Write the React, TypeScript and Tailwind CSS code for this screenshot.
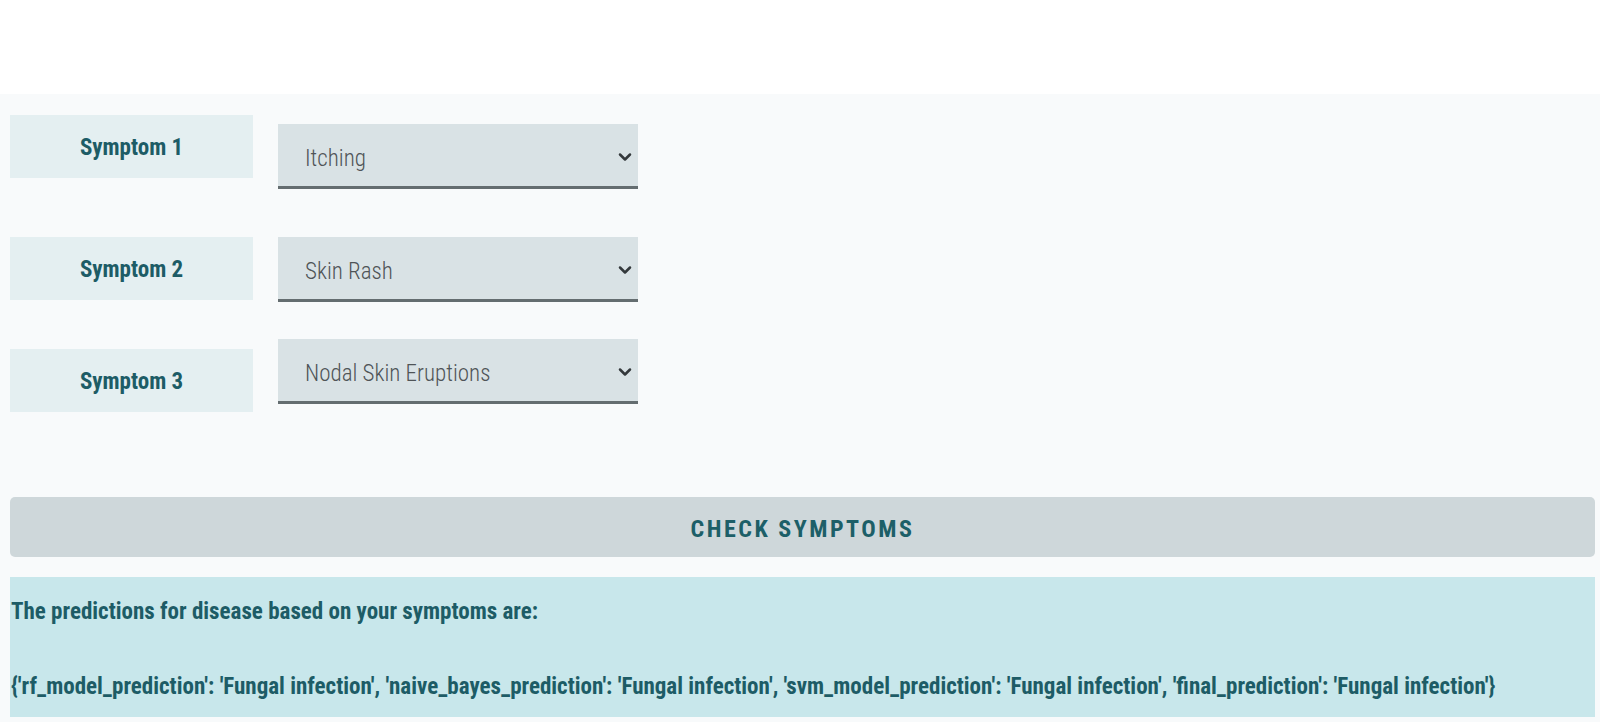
import { ChevronDown } from "lucide-react";

const font = { fontFamily: "'Roboto Condensed', Roboto, 'Liberation Sans', sans-serif" };

const SymptomSelect = ({ value }: { value: string }) => {
  return (
    <div className="relative w-[360px] h-[65px] bg-[#d9e2e5] border-b-[3px] border-[#646d70]">
      <select
        value={value}
        onChange={() => {}}
        className="appearance-none w-full h-full bg-transparent pl-[27px] pt-[8px] text-[23px] font-light text-[#4f5457] outline-none"
        style={font}
      >
        <option>{value}</option>
      </select>
      <ChevronDown
        size={20}
        strokeWidth={3}
        className="absolute right-[3px] top-[23px] text-[#33383b] pointer-events-none"
      />
    </div>
  );
};

const Label = ({ text }: { text: string }) => (
  <div className="w-[243px] h-[63px] pt-[3px] bg-[#e4eff1] flex items-center justify-center text-[23px] font-bold text-[#1d5c66]">
    {text}
  </div>
);

export default function App() {
  return (
    <div className="w-full min-h-screen bg-[#f8fafb]" style={font}>
      {/* top band */}
      <div className="h-[94px] bg-white" />

      <section className="pt-[21px] pl-[10px] pr-[5px] pb-[5px]">
        {/* Row 1 */}
        <div className="flex items-start gap-[25px]">
          <Label text="Symptom 1" />
          <div className="mt-[9px]">
            <SymptomSelect value="Itching" />
          </div>
        </div>

        {/* Row 2 */}
        <div className="flex items-start gap-[25px] mt-[48px]">
          <Label text="Symptom 2" />
          <SymptomSelect value="Skin Rash" />
        </div>

        {/* Row 3 */}
        <div className="flex items-start gap-[25px] mt-[37px]">
          <div className="mt-[10px]">
            <Label text="Symptom 3" />
          </div>
          <SymptomSelect value="Nodal Skin Eruptions" />
        </div>

        <button className="mt-[85px] w-full h-[60px] pt-[3px] rounded-[5px] bg-[#ced7da] text-[24px] font-bold tracking-[2.5px] text-[#1d5f68] uppercase">
          Check Symptoms
        </button>

        <div className="mt-[20px] h-[140px] bg-[#c8e7eb] pl-[1px] pt-[17px] text-[23px] font-bold text-[#1d5c66]">
          <p className="leading-[36px]">The predictions for disease based on your symptoms are:</p>
          <p className="leading-[36px] mt-[39px]">
            {"{'rf_model_prediction': 'Fungal infection', 'naive_bayes_prediction': 'Fungal infection', 'svm_model_prediction': 'Fungal infection', 'final_prediction': 'Fungal infection'}"}
          </p>
        </div>
      </section>
    </div>
  );
}
